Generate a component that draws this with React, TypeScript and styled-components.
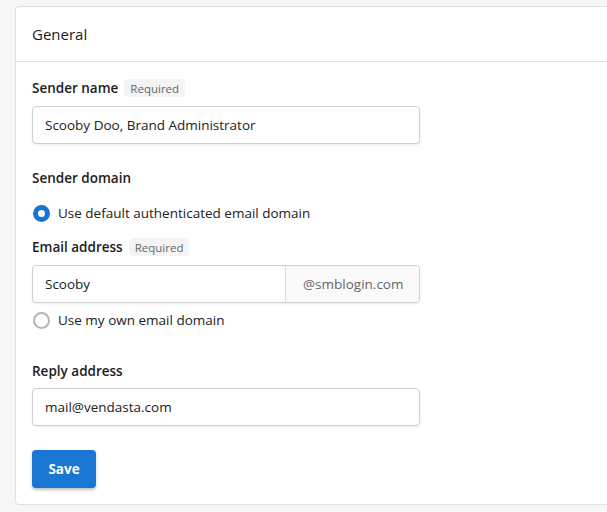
import React from "react";
import styled, { createGlobalStyle } from "styled-components";

const Global = createGlobalStyle`
  html, body { margin: 0; padding: 0; background: #f7f7f7; }
  body { font-family: "Open Sans", "Noto Sans", Arial, sans-serif; color: #212121; }
  * { box-sizing: border-box; }
`;

const Page = styled.div`
  padding: 6px 0 0 15px;
  width: 607px;
  height: 512px;
  overflow: hidden;
`;

const Card = styled.div`
  background: #fff;
  border: 1px solid #e0e0e0;
  border-radius: 4px;
  width: 620px;
`;

const CardHeader = styled.div`
  height: 55px;
  display: flex;
  align-items: center;
  padding-left: 16px;
  border-bottom: 1px solid #e0e0e0;
  font-size: 15px;
  color: #212121;
`;

const CardBody = styled.div`
  padding: 16px 16px 16px 16px;
  display: flex;
  flex-direction: column;
`;

const LabelRow = styled.div<{ $mt?: number; $mb?: number }>`
  display: flex;
  align-items: center;
  gap: 6px;
  height: 20px;
  margin-top: ${(p) => p.$mt ?? 0}px;
  margin-bottom: ${(p) => p.$mb ?? 8}px;
`;

const Label = styled.span`
  font-size: 13.5px;
  font-weight: 600;
  color: #212121;
`;

const Chip = styled.span`
  display: inline-flex;
  align-items: center;
  height: 18px;
  padding: 0 6px;
  border-radius: 4px;
  background: #f4f4f4;
  color: #666;
  font-size: 11.5px;
`;

const InputBox = styled.div`
  width: 388px;
  height: 38px;
  border: 1px solid #d0d0d0;
  border-radius: 4px;
  box-shadow: 0 1px 2px rgba(0, 0, 0, 0.08);
  display: flex;
  align-items: stretch;
  overflow: hidden;
  background: #fff;
`;

const InputText = styled.div`
  flex: 1;
  display: flex;
  align-items: center;
  padding-left: 12px;
  font-size: 13.5px;
  color: #212121;
`;

const Suffix = styled.div`
  width: 134px;
  border-left: 1px solid #dcdcdc;
  background: #fafafa;
  display: flex;
  align-items: center;
  padding-left: 17px;
  font-size: 13.5px;
  color: #666;
`;

const RadioRow = styled.div<{ $mt?: number }>`
  display: flex;
  align-items: center;
  gap: 8px;
  height: 24px;
  margin-top: ${(p) => p.$mt ?? 0}px;
  padding-left: 1px;
  font-size: 13.5px;
  color: #212121;
`;

const RadioDot = styled.span<{ $on?: boolean }>`
  width: 17px;
  height: 17px;
  border-radius: 50%;
  flex: none;
  border: ${(p) => (p.$on ? "5px solid #1a73d2" : "2px solid #b5b5b5")};
  background: #fff;
`;

const ButtonRow = styled.div`
  margin-top: 24px;
  display: flex;
`;

const SaveButton = styled.button`
  width: 64px;
  height: 38px;
  border: none;
  border-radius: 4px;
  background: #1976d2;
  color: #fff;
  font-family: inherit;
  font-size: 13.5px;
  font-weight: 700;
  box-shadow: 0 2px 3px rgba(0, 0, 0, 0.25);
  cursor: pointer;
`;

export default function App() {
  return (
    <>
      <Global />
      <Page>
        <Card>
          <CardHeader>General</CardHeader>
          <CardBody>
            <LabelRow>
              <Label>Sender name</Label>
              <Chip>Required</Chip>
            </LabelRow>
            <InputBox>
              <InputText>Scooby Doo, Brand Administrator</InputText>
            </InputBox>

            <LabelRow $mt={24}>
              <Label>Sender domain</Label>
            </LabelRow>
            <RadioRow $mt={5}>
              <RadioDot $on />
              Use default authenticated email domain
            </RadioRow>

            <LabelRow $mt={12}>
              <Label>Email address</Label>
              <Chip>Required</Chip>
            </LabelRow>
            <InputBox>
              <InputText>Scooby</InputText>
              <Suffix>@smblogin.com</Suffix>
            </InputBox>
            <RadioRow $mt={5}>
              <RadioDot />
              Use my own email domain
            </RadioRow>

            <LabelRow $mt={29} $mb={7}>
              <Label>Reply address</Label>
            </LabelRow>
            <InputBox>
              <InputText>mail@vendasta.com</InputText>
            </InputBox>

            <ButtonRow>
              <SaveButton>Save</SaveButton>
            </ButtonRow>
          </CardBody>
        </Card>
      </Page>
    </>
  );
}
